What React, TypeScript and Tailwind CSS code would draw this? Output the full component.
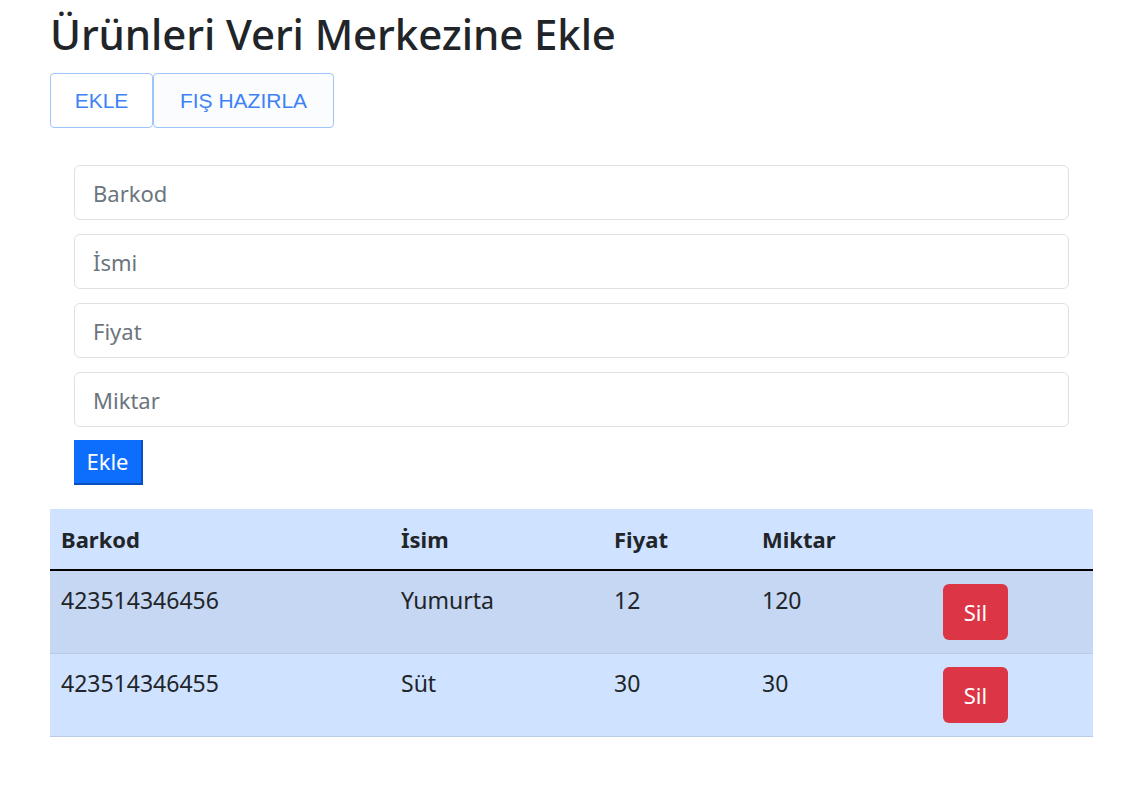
import React from 'react';

const rows = [
  { barkod: '423514346456', isim: 'Yumurta', fiyat: '12', miktar: '120' },
  { barkod: '423514346455', isim: 'Süt', fiyat: '30', miktar: '30' },
];

export default function App() {
  return (
    <div className="min-h-screen bg-white pl-[50px] pt-[9px] text-[#212529] font-['Noto_Sans','Open_Sans',sans-serif]">
      <div className="w-[1043px]">
        <h1 className="text-[42px] font-medium leading-[50px] tracking-[-0.1px]">Ürünleri Veri Merkezine Ekle</h1>
        <div className="mt-[14px] flex">
          <button className="h-[55px] w-[103px] rounded-[4px] border border-[#9ec5fe] bg-white font-['Liberation_Sans',sans-serif] text-[21px] text-[#3d82f7]">
            EKLE
          </button>
          <button className="h-[55px] w-[181px] rounded-[4px] border border-[#9ec5fe] bg-[#fbfcfe] font-['Liberation_Sans',sans-serif] text-[21px] text-[#3d82f7]">
            FIŞ HAZIRLA
          </button>
        </div>

        <div className="mt-[37px] flex flex-col gap-[14px] px-[24px]">
          {['Barkod', 'İsmi', 'Fiyat', 'Miktar'].map((p) => (
            <input
              key={p}
              placeholder={p}
              className="h-[55px] w-full rounded-[6px] border border-[#dee2e6] px-[18px] text-[22px] placeholder:text-[#6c757d] outline-none"
            />
          ))}
        </div>
        <div className="px-[24px] mt-[13px]">
          <button className="h-[45px] w-[69px] border-b-2 border-r-2 border-[#0a4fbf] bg-[#0d6efd] text-[22px] text-white">
            Ekle
          </button>
        </div>

        <table className="mt-[24px] w-full border-collapse text-[23px]">
          <thead>
            <tr className="bg-[#cfe2ff] border-b-2 border-black text-[22px]">
              <th className="h-[61px] w-[340px] px-[11px] text-left font-bold">Barkod</th>
              <th className="w-[213px] px-[11px] text-left font-bold">İsim</th>
              <th className="w-[148px] px-[11px] text-left font-bold">Fiyat</th>
              <th className="w-[181px] px-[11px] text-left font-bold">Miktar</th>
              <th className="px-[11px]"></th>
            </tr>
          </thead>
          <tbody>
            {rows.map((r, i) => (
              <tr key={r.barkod} className={(i === 0 ? 'bg-[#c5d7f2]' : 'bg-[#cfe2ff]') + ' border-b border-[#bacbe6]'}>
                <td className="px-[11px] pt-[14px] align-top leading-[30px]">{r.barkod}</td>
                <td className="px-[11px] pt-[14px] align-top leading-[30px]">{r.isim}</td>
                <td className="px-[11px] pt-[14px] align-top leading-[30px]">{r.fiyat}</td>
                <td className="px-[11px] pt-[14px] align-top leading-[30px]">{r.miktar}</td>
                <td className="px-[11px] pt-[13px] pb-[13px] align-top">
                  <button className="h-[56px] w-[65px] rounded-[6px] bg-[#dc3545] text-[22px] text-white">Sil</button>
                </td>
              </tr>
            ))}
          </tbody>
        </table>
      </div>
    </div>
  );
}
